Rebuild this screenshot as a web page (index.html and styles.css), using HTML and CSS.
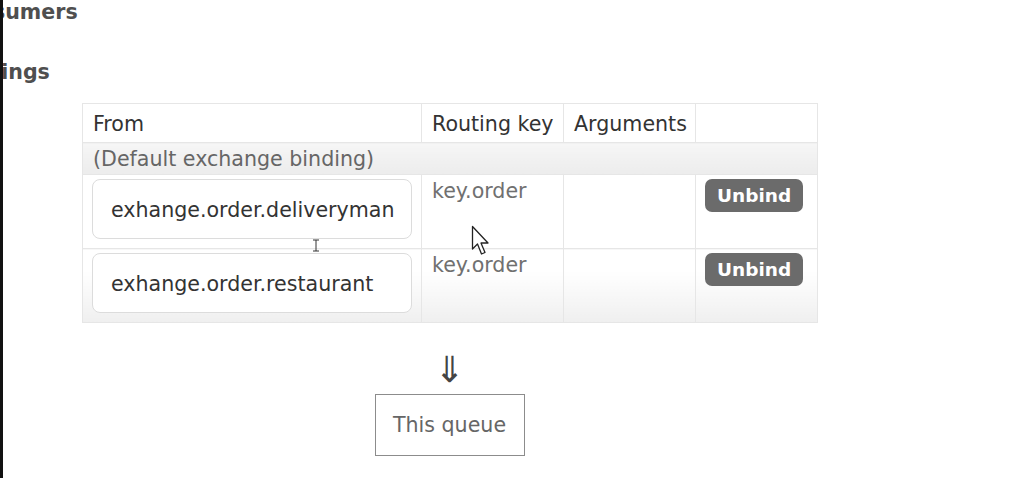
FILE: index.html
```html
<!DOCTYPE html>
<html lang="en">
<head>
    <meta charset="UTF-8">
    <meta name="viewport" content="width=device-width, initial-scale=1.0">
    <title>Queue bindings</title>
    <link rel="stylesheet" href="styles.css">
</head>
<body>
    <div class="frame">
        <h3 class="section first">Consumers</h3>
        <h3 class="section">Bindings</h3>

        <div class="bindings">
            <table class="list">
                <thead>
                    <tr>
                        <th class="col-from">From</th>
                        <th class="col-key">Routing key</th>
                        <th class="col-args">Arguments</th>
                        <th class="col-action"></th>
                    </tr>
                </thead>
                <tbody>
                    <tr class="default">
                        <td colspan="4">(Default exchange binding)</td>
                    </tr>
                    <tr class="binding">
                        <td><span class="exchange">exhange.order.deliveryman</span></td>
                        <td class="key">key.order</td>
                        <td></td>
                        <td><button type="button">Unbind</button></td>
                    </tr>
                    <tr class="binding alt">
                        <td><span class="exchange">exhange.order.restaurant</span></td>
                        <td class="key">key.order</td>
                        <td></td>
                        <td><button type="button">Unbind</button></td>
                    </tr>
                </tbody>
            </table>

            <div class="arrow">&#8659;</div>
            <div class="this-queue">This queue</div>

            <!-- mouse pointers captured in the screenshot -->
            <svg class="cursor pointer" width="20" height="32" viewBox="0 0 20 32">
                <path d="M1.5 1.5 L1.5 24 L6.5 19 L10.5 29 L14 27.5 L10 18 L17 18 Z" fill="#fff" stroke="#222" stroke-width="1.3" stroke-linejoin="round"/>
            </svg>
            <svg class="cursor ibeam" width="8" height="13" viewBox="0 0 8 13">
                <path d="M1 1 H7 M4 1 V12 M1 12 H7" fill="none" stroke="#333" stroke-width="1"/>
            </svg>
        </div>
    </div>
</body>
</html>
```

FILE: styles.css
```css
body {
    margin: 0;
    background: #fff;
    font-family: "DejaVu Sans", Verdana, sans-serif;
    font-size: 20.6px;
    color: #333;
}
.frame {
    height: 100vh;
    border-left: 3px solid #111;
    overflow: hidden;
    box-sizing: border-box;
}
.section {
    margin: 36px 0 0 -54px;
    font-size: 20.6px;
    line-height: 24px;
    font-weight: bold;
    color: #4f4f4f;
}
.section.first {
    margin-top: 0;
}
.bindings {
    position: relative;
    width: 735px;
    margin: 19px 0 0 79px;
    text-align: center;
}
table.list {
    width: 735px;
    border-collapse: collapse;
    table-layout: fixed;
    border: 1px solid #e2e2e2;
    text-align: left;
}
.list th,
.list td {
    border: 1px solid #e6e6e6;
    line-height: 24px;
    font-weight: normal;
    white-space: nowrap;
}
.list th {
    height: 37px;
    padding: 1px 0 0 10px;
    color: #333;
    background: #fff;
}
.col-from { width: 328px; }
.col-key { width: 131px; }
.col-args { width: 121px; }
.col-action { width: 111px; }
.list tr.default td {
    height: 30px;
    padding: 1px 10px 0;
    color: #666;
    background: linear-gradient(#f6f6f6, #ececec);
}
.list tr.binding td {
    height: 63px;
    padding: 4px 10px 6px 10px;
    vertical-align: top;
    background: #fff;
}
.list tr.binding.alt td {
    background: linear-gradient(#fff 30%, #efefef);
}
.list tr.binding td:first-child,
.list tr.binding td:last-child {
    padding-left: 9px;
}
.key {
    color: #707070;
}
.exchange {
    display: block;
    box-sizing: border-box;
    width: 320px;
    height: 60px;
    padding-left: 18px;
    border: 1px solid #dcdcdc;
    border-radius: 8px;
    background: #fff;
    line-height: 60px;
    color: #333;
}
button {
    padding: 0 12px;
    height: 33px;
    border: none;
    border-radius: 7px;
    background-color: #6b6b6b;
    color: #fff;
    font-family: "DejaVu Sans", Verdana, sans-serif;
    font-size: 18.5px;
    font-weight: bold;
    cursor: pointer;
}
.arrow {
    margin-top: 25px;
    font-size: 36px;
    line-height: 44px;
    color: #444;
}
.this-queue {
    display: inline-block;
    box-sizing: border-box;
    width: 150px;
    height: 62px;
    margin-top: 2px;
    border: 1px solid #8c8c8c;
    line-height: 60px;
    text-align: center;
    color: #666;
}
.cursor {
    position: absolute;
}
.pointer {
    left: 389px;
    top: 122px;
}
.ibeam {
    left: 230px;
    top: 136px;
}
```
